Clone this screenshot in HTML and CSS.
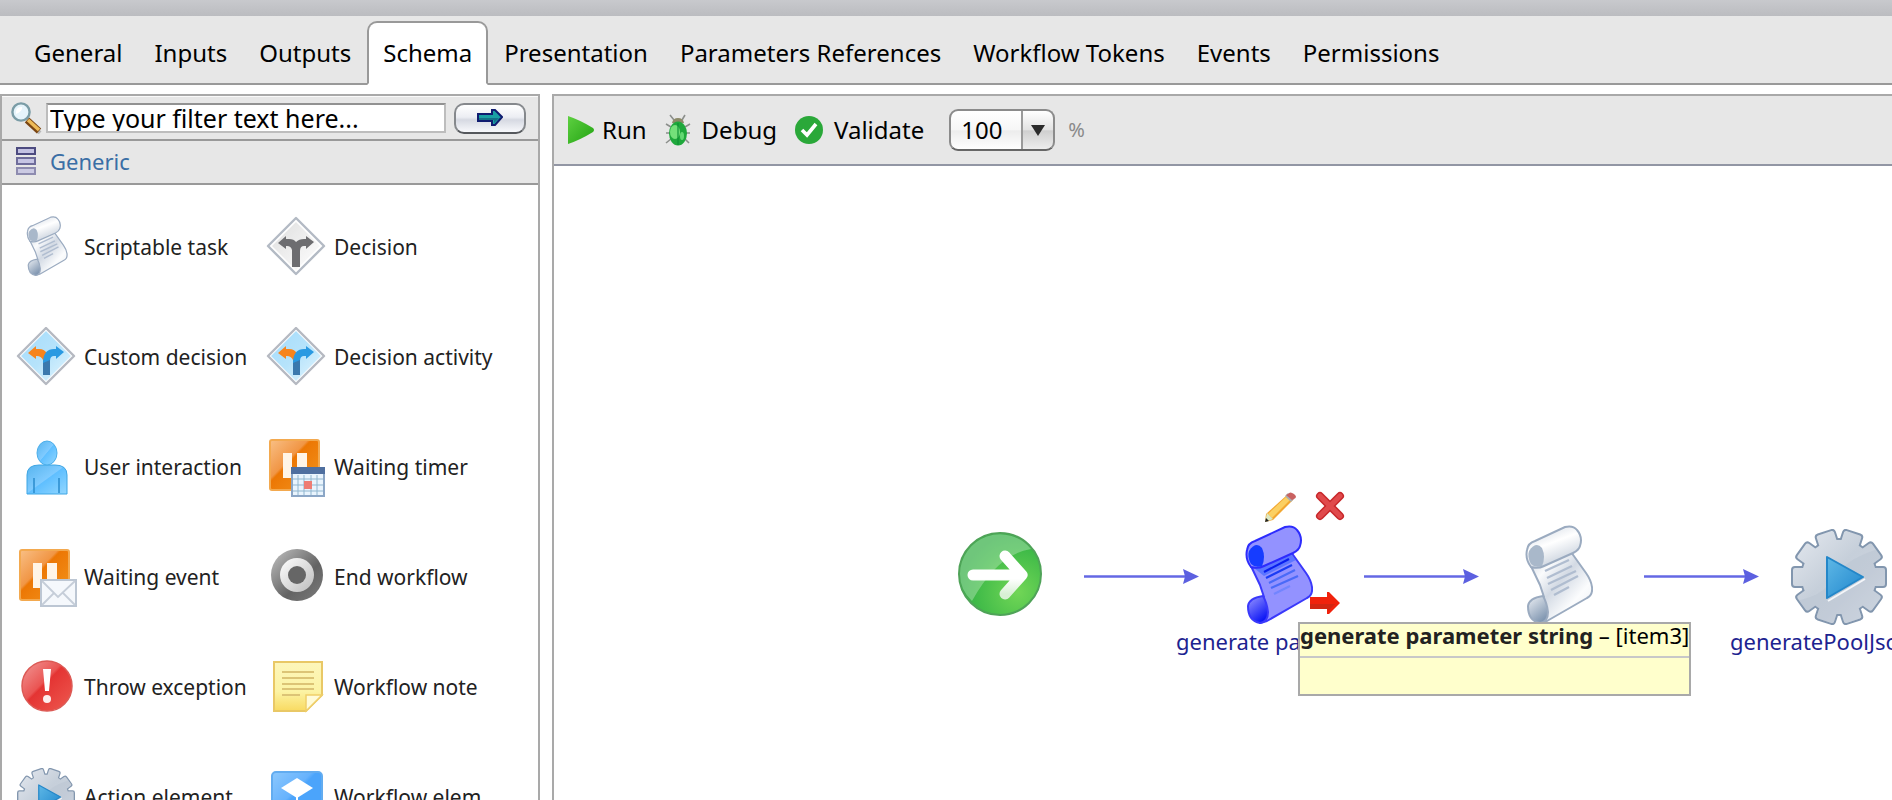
FILE: index.html
```html
<!DOCTYPE html>
<html lang="en">
<head>
<meta charset="utf-8">
<title>Workflow schema</title>
<link rel="stylesheet" href="styles.css">
</head>
<body>
<svg class="defs" aria-hidden="true">
  <defs>
    <linearGradient id="paper" x1="0" y1="0" x2="1" y2="1">
      <stop offset="0" stop-color="#cdd5e0"/><stop offset=".25" stop-color="#fafbfc"/><stop offset=".45" stop-color="#d3dae4"/><stop offset=".7" stop-color="#fbfcfd"/><stop offset="1" stop-color="#e9edf2"/>
    </linearGradient>
    <linearGradient id="roll" x1="0" y1="0" x2=".5" y2="1">
      <stop offset="0" stop-color="#c9d2de"/><stop offset=".5" stop-color="#ffffff"/><stop offset="1" stop-color="#c6cfdb"/>
    </linearGradient>
    <linearGradient id="curl" x1="0" y1="0" x2=".6" y2="1">
      <stop offset="0" stop-color="#eef1f5"/><stop offset="1" stop-color="#7f95b0"/>
    </linearGradient>
    <linearGradient id="curlBlue" x1="0" y1="0" x2=".6" y2="1">
      <stop offset="0" stop-color="#9a98ff"/><stop offset="1" stop-color="#0a14f5"/>
    </linearGradient>
    <linearGradient id="signGrey" x1="0" y1="0" x2="1" y2="1">
      <stop offset="0" stop-color="#dedede"/><stop offset="1" stop-color="#ffffff"/>
    </linearGradient>
    <linearGradient id="signBlue" x1="0" y1="0" x2="1" y2="1">
      <stop offset="0" stop-color="#a4dcfb"/><stop offset=".5" stop-color="#b6e3fb"/><stop offset="1" stop-color="#e4f6fe"/>
    </linearGradient>
    <linearGradient id="orange" x1="0" y1="0" x2="1" y2="1">
      <stop offset="0" stop-color="#f8bd82"/><stop offset=".38" stop-color="#f19645"/><stop offset=".42" stop-color="#ec7704"/><stop offset="1" stop-color="#f3951f"/>
    </linearGradient>
    <linearGradient id="person" x1="0" y1="0" x2="1" y2="1">
      <stop offset="0" stop-color="#56b4ee"/><stop offset=".48" stop-color="#80cbff"/><stop offset=".5" stop-color="#5fbfff"/><stop offset="1" stop-color="#93d7ff"/>
    </linearGradient>
    <linearGradient id="steel" x1="0" y1="0" x2="1" y2="1">
      <stop offset="0" stop-color="#c3c3c3"/><stop offset=".6" stop-color="#636363"/><stop offset="1" stop-color="#7b7b7b"/>
    </linearGradient>
    <linearGradient id="silver" x1="0" y1="0" x2="1" y2="1">
      <stop offset="0" stop-color="#ffffff"/><stop offset="1" stop-color="#bcbcbc"/>
    </linearGradient>
    <linearGradient id="red" x1="0" y1="0" x2="1" y2="1">
      <stop offset="0" stop-color="#f19a98"/><stop offset=".42" stop-color="#ea5553"/><stop offset=".46" stop-color="#e43433"/><stop offset="1" stop-color="#ee5a50"/>
    </linearGradient>
    <linearGradient id="note" x1="0" y1="0" x2="0" y2="1">
      <stop offset="0" stop-color="#fdf6bb"/><stop offset=".6" stop-color="#fcf3a4"/><stop offset="1" stop-color="#f8da61"/>
    </linearGradient>
    <linearGradient id="gearFill" x1="0" y1="0" x2="1" y2="1">
      <stop offset="0" stop-color="#e6eaf0"/><stop offset=".45" stop-color="#c6cfda"/><stop offset=".62" stop-color="#c9d1dc"/><stop offset="1" stop-color="#dde2ea"/>
    </linearGradient>
    <linearGradient id="play" x1="0" y1="0" x2="1" y2="1">
      <stop offset="0" stop-color="#5fb8e6"/><stop offset="1" stop-color="#1f86cd"/>
    </linearGradient>
    <linearGradient id="sky" x1="0" y1="0" x2="1" y2="1">
      <stop offset="0" stop-color="#8cc8fd"/><stop offset=".4" stop-color="#66b2fd"/><stop offset=".45" stop-color="#4ba4fb"/><stop offset="1" stop-color="#4ba4fb"/>
    </linearGradient>
    <radialGradient id="go" cx=".72" cy=".72" r=".7">
      <stop offset="0" stop-color="#71d656"/><stop offset=".75" stop-color="#3fba48"/><stop offset="1" stop-color="#38b148"/>
    </radialGradient>
    <linearGradient id="goArrow" x1="0" y1="0" x2="0" y2="1">
      <stop offset=".6" stop-color="#ffffff"/><stop offset="1" stop-color="#d8f0d5"/>
    </linearGradient>
    <linearGradient id="run" x1="0" y1="0" x2="1" y2="1">
      <stop offset="0" stop-color="#5ed041"/><stop offset="1" stop-color="#22a312"/>
    </linearGradient>
    <clipPath id="gearShape">
      <circle r="37"/>
      <rect x="-46" y="-9" width="92" height="18" rx="2"/>
      <rect x="-46" y="-9" width="92" height="18" rx="2" transform="rotate(36)"/>
      <rect x="-46" y="-9" width="92" height="18" rx="2" transform="rotate(72)"/>
      <rect x="-46" y="-9" width="92" height="18" rx="2" transform="rotate(108)"/>
      <rect x="-46" y="-9" width="92" height="18" rx="2" transform="rotate(144)"/>
    </clipPath>
    <symbol id="gear" viewBox="-48 -48 96 96">
      <g fill="#8296ae" stroke="#8296ae" stroke-width="4">
        <circle r="37"/>
        <rect x="-46" y="-9" width="92" height="18" rx="2"/>
        <rect x="-46" y="-9" width="92" height="18" rx="2" transform="rotate(36)"/>
        <rect x="-46" y="-9" width="92" height="18" rx="2" transform="rotate(72)"/>
        <rect x="-46" y="-9" width="92" height="18" rx="2" transform="rotate(108)"/>
        <rect x="-46" y="-9" width="92" height="18" rx="2" transform="rotate(144)"/>
      </g>
      <g clip-path="url(#gearShape)"><rect x="-48" y="-48" width="96" height="96" fill="url(#gearFill)"/><path d="M48-30Q10-22-4 0T-48 24V48H48z" fill="#b4c0ce" opacity=".35"/></g>
      <path d="M-11 24L26 2" stroke="#f4f6f9" stroke-width="2"/>
      <path d="M-12-20L24 0L-12 21z" fill="url(#play)" stroke="#2487c9" stroke-width="2" stroke-linejoin="round"/>
    </symbol>
    <symbol id="scroll" viewBox="-1 -1 68 99">
      <path d="M4 38L14 59L18 71L6 76L14 97L21 95L61 72Q67 69 66 61Q65 54 60 47L45 26L24 30z" fill="url(#paper)" stroke="#9babc0" stroke-width="2" stroke-linejoin="round"/>
      <path d="M17 70Q3 72 2 80Q2 95 14 97Q22 96 22 86Q21 77 17 70z" fill="url(#curl)" stroke="#9babc0" stroke-width="2"/>
      <path d="M1 24Q2 17 9 15L39 1Q47-1 51 4Q57 11 54 20Q53 24 47 27L18 40Q12 43 5 41Q-1 33 1 24z" fill="url(#roll)" stroke="#9babc0" stroke-width="2"/>
      <path d="M3 25Q10 15 16 22Q20 31 16 40Q9 42 5 38Q1 31 3 25z" fill="#a9b8ca"/>
      <g stroke="#b0bdd0" stroke-width="2.4"><path d="M19 45L43 34M21 52L46 40M22 58L50 45M25 64L52 50M28 69L43 61"/></g>
    </symbol>
    <symbol id="scrollBlue" viewBox="-1 -1 68 99">
      <path d="M4 38L14 59L18 71L6 76L14 97L21 95L61 72Q67 69 66 61Q65 54 60 47L45 26L24 30z" fill="#9392ff" stroke="#3a39fb" stroke-width="2" stroke-linejoin="round"/>
      <path d="M8 42L44 27L50 34L18 50z" fill="#3f66ff" opacity=".65"/>
      <path d="M17 70Q3 72 2 80Q2 95 14 97Q22 96 22 86Q21 77 17 70z" fill="url(#curlBlue)" stroke="#3a39fb" stroke-width="2"/>
      <path d="M1 24Q2 17 9 15L39 1Q47-1 51 4Q57 11 54 20Q53 24 47 27L18 40Q12 43 5 41Q-1 33 1 24z" fill="#9392ff" stroke="#2d2cfd" stroke-width="2"/>
      <path d="M3 25Q10 15 16 22Q20 31 16 40Q9 42 5 38Q1 31 3 25z" fill="#163cff"/>
      <g fill="none" stroke-width="2.2"><path d="M18 46L43 33" stroke="#0a1fef"/><path d="M20 52L46 39" stroke="#1a3cf5"/><path d="M23 57L49 44M25 62L52 50" stroke="#4a6af8"/><path d="M28 68L44 60" stroke="#7285ff"/></g>
    </symbol>
    <symbol id="fork" viewBox="0 0 60 60">
      <path d="M26 50V33Q25 29 21 29H20V32L12 26L20 19V22H23Q28 22 30 25Q33 22 38 22H40V19L48 25L40 32V29H38Q34 29 34 34V50z"/>
    </symbol>
    <symbol id="pause" viewBox="0 0 60 60">
      <rect x="3" y="2" width="51" height="52" rx="3" fill="#f3a94f"/>
      <rect x="5" y="4" width="47" height="48" rx="1" fill="url(#orange)"/>
      <path d="M17 16h9v25h-9zM31 16h10v25H31z" fill="#fff4e6"/>
    </symbol>
    <symbol id="decisionBlue" viewBox="0 0 60 60">
      <path d="M30 1L58 29L30 57L2 29z" fill="#fff" stroke="#b5b9c1" stroke-width="2.4" stroke-linejoin="round"/>
      <path d="M30 4L55 29L30 54L5 29z" fill="url(#signBlue)"/>
      <path d="M27 36V33Q25 29 21 29H20V32L12 26L20 19V22H23Q29 22 31 27V36z" fill="#f7841c"/>
      <path d="M27 48V34Q28 22 38 22H40V19L48 25L40 32V29H38Q34 29 34 34V48z" fill="#2a9ae2"/>
      <path d="M27 36L34 33V48H27z" fill="#3b79ae"/>
    </symbol>
  </defs>
</svg>

<div class="titlebar"></div>
<nav class="tabs" role="tablist">
  <button class="tab" role="tab">General</button>
  <button class="tab" role="tab">Inputs</button>
  <button class="tab" role="tab">Outputs</button>
  <button class="tab tab-active" role="tab" aria-selected="true">Schema</button>
  <button class="tab" role="tab">Presentation</button>
  <button class="tab" role="tab">Parameters References</button>
  <button class="tab" role="tab">Workflow Tokens</button>
  <button class="tab" role="tab">Events</button>
  <button class="tab" role="tab">Permissions</button>
</nav>

<main class="workspace">
  <aside class="palette">
    <form class="filter">
      <svg class="filter-icon" viewBox="0 0 32 32" aria-hidden="true">
        <path d="M17 19L29 31" stroke="#8a8a8a" stroke-width="4" opacity=".5"/>
        <path d="M16 18L28 29" stroke="#7a4512" stroke-width="6.5"/>
        <path d="M17 18L28 28" stroke="#eebb58" stroke-width="3.5"/>
        <circle cx="10" cy="10" r="8.6" fill="#e6f4fb" stroke="#7a9ca6" stroke-width="2.4"/>
        <path d="M5 10Q5 5 11 5Q12 9 5 12z" fill="#fff"/>
      </svg>
      <input class="filter-input" type="text" aria-label="Filter" value="Type your filter text here...">
      <button class="filter-go" type="button" aria-label="Apply filter">
        <svg width="26" height="18" viewBox="0 0 26 18" aria-hidden="true"><path d="M1 5H15V1H18L25 8L18 16H15V12H1z" fill="#1aa0a4" stroke="#101c70" stroke-width="2"/><path d="M2 9H22L17 14V11H2z" fill="#147088"/></svg>
      </button>
    </form>
    <h2 class="group">
      <svg width="20" height="28" viewBox="0 0 20 28" aria-hidden="true">
        <rect x="1" y="1" width="18" height="6" fill="#c3c2e2" stroke="#4d4b80" stroke-width="2"/>
        <rect x="1" y="11" width="18" height="6" fill="#c6c5e4" stroke="#6f6d9b" stroke-width="2"/>
        <rect x="1" y="21" width="18" height="6" fill="#cbcae3" stroke="#8e8cb0" stroke-width="2"/>
      </svg>
      Generic
    </h2>
    <ul class="items">
      <li class="item"><svg class="item-icon" viewBox="0 0 60 60"><use href="#scroll" x="10" y="-1" width="42" height="60"/></svg>Scriptable task</li>
      <li class="item"><svg class="item-icon" viewBox="0 0 60 60"><path d="M30 1L58 29L30 57L2 29z" fill="#fff" stroke="#b3bac4" stroke-width="2.4" stroke-linejoin="round"/><path d="M30 5L54 29L30 53L6 29z" fill="url(#signGrey)"/><use href="#fork" width="60" height="60" fill="#6d6d70"/></svg>Decision</li>
      <li class="item"><svg class="item-icon" viewBox="0 0 60 60"><use href="#decisionBlue" width="60" height="60"/></svg>Custom decision</li>
      <li class="item"><svg class="item-icon" viewBox="0 0 60 60"><use href="#decisionBlue" width="60" height="60"/></svg>Decision activity</li>
      <li class="item"><svg class="item-icon" viewBox="0 0 60 60">
        <path d="M11 57V38Q11 28 23 28H39Q51 28 51 38V57z" fill="url(#person)" stroke="#3fa6e4" stroke-width="1"/>
        <path d="M18 56V41M43 56V41" stroke="#2f8fd0" stroke-width="1.6"/>
        <ellipse cx="31" cy="16" rx="10" ry="12" fill="url(#person)" stroke="#4aaeea" stroke-width="1"/>
      </svg>User interaction</li>
      <li class="item"><svg class="item-icon" viewBox="0 0 60 60"><use href="#pause" width="60" height="60"/>
        <rect x="26" y="31" width="32" height="28" fill="#e9f4fd" stroke="#8ba6c6" stroke-width="2"/>
        <path d="M25 30h34v7H25z" fill="#4f6f9f"/>
        <path d="M27 42H57M27 48H57M27 54H57M32 38V58M38 38V58M45 38V58M51 38V58" stroke="#90b6cf" stroke-width="1"/>
        <rect x="38" y="44" width="8" height="8" fill="#ee7d74"/>
      </svg>Waiting timer</li>
      <li class="item"><svg class="item-icon" viewBox="0 0 60 60"><use href="#pause" width="60" height="60"/>
        <rect x="25" y="33" width="35" height="26" fill="#f5f8fc" stroke="#bcc6d3" stroke-width="2"/>
        <path d="M26 34L42 50L59 34M26 58L38 46M59 58L47 46" fill="none" stroke="#c5cdd8" stroke-width="1.8"/>
      </svg>Waiting event</li>
      <li class="item"><svg class="item-icon" viewBox="0 0 60 60"><circle cx="31" cy="28" r="26" fill="url(#steel)"/><circle cx="31" cy="28" r="17" fill="url(#silver)"/><circle cx="31" cy="28" r="9" fill="#666"/></svg>End workflow</li>
      <li class="item"><svg class="item-icon" viewBox="0 0 60 60"><circle cx="31" cy="29" r="25" fill="url(#red)" stroke="#dc5a55" stroke-width="1.5"/><path d="M27 12H35L33 34H29z" fill="#fff"/><circle cx="31" cy="42" r="4" fill="#fdeeee"/></svg>Throw exception</li>
      <li class="item"><svg class="item-icon" viewBox="0 0 60 60">
        <path d="M8 5H56V38L40 54H8z" fill="url(#note)" stroke="#e9c866" stroke-width="2"/>
        <path d="M40 54V38H56z" fill="#fffbd8" stroke="#efcf6a" stroke-width="1.5"/>
        <path d="M16 15H48M16 21H48M16 27H48M16 32H48M16 38H34" stroke="#dcc476" stroke-width="2.2"/>
      </svg>Workflow note</li>
      <li class="item"><svg class="item-icon" viewBox="0 0 60 60"><use href="#gear" x="1" y="1" width="58" height="58"/></svg>Action element</li>
      <li class="item"><svg class="item-icon" viewBox="0 0 60 60"><rect x="6" y="5" width="50" height="52" rx="4" fill="url(#sky)" stroke="#62acf0" stroke-width="2"/><path d="M31 11L47 21L31 31L15 21z" fill="#fff"/><path d="M31 30V38M18 46V38H44V46" fill="none" stroke="#fff" stroke-width="2"/></svg>Workflow elem</li>
    </ul>
  </aside>

  <section class="editor">
    <div class="toolbar">
      <button class="tool tool-run"><svg width="26" height="28" viewBox="0 0 26 28" aria-hidden="true"><path d="M0 0Q12 4 25 12Q27 14 25 16Q12 24 0 28z" fill="url(#run)"/></svg>Run</button>
      <button class="tool tool-debug"><svg width="26" height="32" viewBox="0 0 26 32" aria-hidden="true">
        <path d="M9 6L5 1M17 6L20 1M6 13L1 10M20 13L25 10M5 19H1M21 19H25M6 25L1 29M20 25L24 29" stroke="#8c8f8c" stroke-width="1.6" fill="none"/>
        <path d="M7 9Q8 4 13 4T19 9z" fill="#8b8a68"/>
        <ellipse cx="13" cy="19.500" rx="9" ry="12" fill="#1fa83c"/><ellipse cx="10" cy="18" rx="5" ry="7" fill="#74e07a"/><path d="M13 9V31" stroke="#0f8f34" stroke-width="1.200"/><ellipse cx="17" cy="22" rx="2" ry="4" fill="#63d873"/>
      </svg>Debug</button>
      <button class="tool tool-validate"><svg width="28" height="28" viewBox="0 0 28 28" aria-hidden="true"><circle cx="14" cy="14" r="14" fill="#2aa839"/><path d="M7 14L12 19L21 8" fill="none" stroke="#fff" stroke-width="3.600"/></svg>Validate</button>
      <div class="zoom">
        <select class="zoom-select" id="zoom"><option>100</option></select>
        <svg class="zoom-arrow" width="14" height="12" viewBox="0 0 14 12" aria-hidden="true"><path d="M0 0H14L7 11z" fill="#2b2b2b"/></svg>
      </div>
      <label class="percent" for="zoom">%</label>
    </div>
    <div class="canvas">
      <svg class="node start" viewBox="0 0 84 84"><circle cx="42" cy="42" r="41" fill="url(#go)" stroke="#4fa358" stroke-width="2"/><path d="M2 42A40 40 0 0 1 73 17Q40 22 14 69Q2 58 2 42z" fill="#fff" opacity=".28"/><path d="M15 43H62M47 24L64 43L47 62" fill="none" stroke="url(#goArrow)" stroke-width="11" stroke-linecap="round" stroke-linejoin="round"/></svg>
      <svg class="node link link-1" viewBox="0 0 116 17"><path d="M0 8.500H102" stroke="#6468e4" stroke-width="2.500"/><path d="M99 1L115 8.500L99 16L101 8.500z" fill="#5c60e0"/></svg>
      <svg class="node link link-2" viewBox="0 0 116 17"><path d="M0 8.500H102" stroke="#6468e4" stroke-width="2.500"/><path d="M99 1L115 8.500L99 16L101 8.500z" fill="#5c60e0"/></svg>
      <svg class="node link link-3" viewBox="0 0 116 17"><path d="M0 8.500H102" stroke="#6468e4" stroke-width="2.500"/><path d="M99 1L115 8.500L99 16L101 8.500z" fill="#5c60e0"/></svg>
      <svg class="node task task-1"><use href="#scrollBlue"/></svg>
      <svg class="node task task-2"><use href="#scroll"/></svg>
      <svg class="node action"><use href="#gear"/></svg>
      <svg class="node edit" viewBox="0 0 32 32"><path d="M2 23L23 4L29 9L9 29L1 31z" fill="#f2a731"/><path d="M4 23L22 6L26 9L8 27z" fill="#fbd063"/><path d="M1 31L3 22L9 28z" fill="#dce8c2"/><path d="M1 31L2 27L5 30z" fill="#222"/><path d="M21 5L24 2L30 8L27 11z" fill="#a9adb0"/><path d="M24 3Q26 0 30 3T30 8L28 9L22 4z" fill="#c96261"/></svg>
      <svg class="node delete" viewBox="0 0 30 30"><path d="M5 5L25 25M25 5L5 25" stroke="#c8282b" stroke-width="8" stroke-linecap="round"/><path d="M5 5L25 25M25 5L5 25" stroke="#e04a4c" stroke-width="5" stroke-linecap="round"/></svg>
      <svg class="node next" viewBox="0 0 32 24"><path d="M1 6H18V1H20L31 12L20 23H18V18H1z" fill="#f0220c"/><path d="M1 13H26L19 20V18H1z" fill="#b92a17" opacity=".55"/></svg>
      <span class="node caption caption-1">generate pa</span>
      <span class="node caption caption-2">generatePoolJson</span>
      <div class="node tooltip" role="tooltip"><p class="tooltip-title"><b>generate parameter string</b> – [item3]</p></div>
    </div>
  </section>
</main>
</body>
</html>
```
FILE: styles.css
```css
* { box-sizing: border-box; }
body {
  margin: 0;
  height: 100vh;
  display: flex;
  flex-direction: column;
  overflow: hidden;
  background: #fff;
  color: #000;
  font: 24px/32px "Noto Sans", "Open Sans", sans-serif;
}
button, input, select { font: inherit; color: inherit; }
.defs { position: absolute; width: 0; height: 0; }

.titlebar { flex: none; height: 16px; background: linear-gradient(#c8c9cd, #bbbcc0); }
.tabs {
  flex: none;
  display: flex;
  padding: 5px 0 0 18px;
  background: linear-gradient(#999, #999) bottom / 100% 2px no-repeat #e7e7e7;
}
.tab {
  padding: 14px 14px;
  border: 2px solid transparent;
  background: none;
  white-space: nowrap;
}
.tab-active {
  border-color: #999;
  border-bottom-color: #fff;
  border-radius: 10px 10px 0 0;
  background: #fff;
}

.workspace {
  flex: 1;
  min-height: 0;
  display: grid;
  grid-template-columns: 540px 1fr;
  gap: 12px;
  padding-top: 9px;
}
.palette, .editor { min-width: 0; overflow: hidden; border: 2px solid #a9a9a9; border-bottom: 0; }
.editor { border-right: 0; display: flex; flex-direction: column; }

.filter {
  display: flex;
  align-items: center;
  height: 45px;
  padding: 0 12px 0 9px;
  border-top: 1px solid #fafafa;
  border-bottom: 2px solid #999;
  background: #e7e7e7;
}
.filter-icon { width: 32px; height: 32px; margin-right: 3px; }
.filter-input {
  flex: 1;
  min-width: 0;
  height: 30px;
  padding: 0 2px;
  border: 2px solid #bdbdbd;
  border-top-color: #929292;
  background: #fff;
  font-size: 25px;
}
.filter-go {
  width: 72px;
  height: 31px;
  margin-left: 8px;
  padding: 0;
  display: flex;
  align-items: center;
  justify-content: center;
  border: 2px solid #85888c;
  border-bottom-color: #55585c;
  border-radius: 10px;
  background: linear-gradient(#fff, #eceef3 45%, #d6d9e2 55%, #f8f9fc);
}
.group {
  display: flex;
  align-items: center;
  gap: 14px;
  height: 44px;
  margin: 0;
  padding: 0 14px 2px;
  border-bottom: 2px solid #999;
  background: #e7e7e7;
  color: #3a6ea5;
  font-size: 22px;
  font-weight: 400;
}
.items {
  display: grid;
  grid-template-columns: 250px 1fr;
  margin: 0;
  padding: 7px 0 0 14px;
  list-style: none;
}
.item {
  display: flex;
  align-items: center;
  gap: 8px;
  height: 110px;
  color: #222;
  font-size: 21px;
  white-space: nowrap;
}
.item-icon { flex: none; width: 60px; height: 60px; overflow: visible; }

.toolbar {
  flex: none;
  display: flex;
  align-items: center;
  height: 70px;
  padding-left: 14px;
  border-bottom: 2px solid #9296a4;
  background: #e7e7e7;
}
.tool {
  display: flex;
  align-items: center;
  gap: 11px;
  margin-right: 18px;
  padding: 0;
  border: 0;
  background: none;
}
.tool-run { gap: 8px; }
.tool-validate { margin-right: 25px; }
.zoom { position: relative; }
.zoom-select {
  display: block;
  width: 106px;
  height: 42px;
  padding: 0 10px;
  border: 2px solid #8b8b8b;
  border-bottom-color: #666;
  border-radius: 9px;
  appearance: none;
  background:
    linear-gradient(#9a9a9a, #9a9a9a) right 30px top / 2px 100% no-repeat,
    linear-gradient(#fff, #e2e2e2 50%, #cfcfcf 52%, #ededed) right / 30px 100% no-repeat,
    linear-gradient(#fff, #f6f6f6 50%, #ececec 52%, #fff);
}
.zoom-arrow { position: absolute; right: 10px; top: 16px; pointer-events: none; }
.percent { margin-left: 13px; color: #8a8a8a; font-size: 20px; }

/* Free-form workflow canvas: every node sits at its own place. */
.canvas { position: relative; flex: 1; overflow: hidden; background: #fff; }
.node { position: absolute; }
.start { left: 404px; top: 366px; width: 84px; height: 84px; }
.link { top: 402px; width: 116px; height: 17px; }
.link-1 { left: 530px; }
.link-2 { left: 810px; }
.link-3 { left: 1090px; }
.task { top: 359px; width: 68px; height: 99px; }
.task-1 { left: 691px; }
.task-2 { left: 971px; }
.action { left: 1237px; top: 363px; width: 96px; height: 96px; }
.edit { left: 710px; top: 325px; width: 32px; height: 32px; }
.delete { left: 761px; top: 325px; width: 30px; height: 30px; }
.next { left: 755px; top: 425px; width: 32px; height: 24px; }
.caption { top: 460px; color: #1d2390; font-size: 22px; line-height: 30px; white-space: nowrap; }
.caption-1 { left: 622px; }
.caption-2 { left: 1176px; }
.tooltip {
  left: 744px;
  top: 456px;
  min-width: 392px;
  height: 74px;
  border: 2px solid #a9a9a9;
  background: #ffffcc;
  font-size: 22px;
}
.tooltip-title {
  height: 34px;
  margin: 0;
  border-bottom: 2px solid #c8c8c8;
  line-height: 22px;
  white-space: nowrap;
}
.tooltip-title b { color: #222; }
```
